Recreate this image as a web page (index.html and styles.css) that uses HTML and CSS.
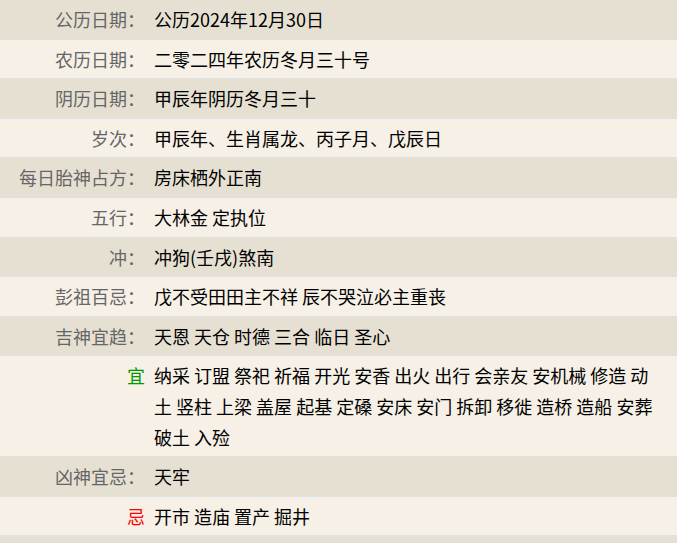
FILE: index.html
```html
<!DOCTYPE html>
<html lang="zh-CN">
<head>
    <meta charset="UTF-8">
    <meta name="viewport" content="width=device-width, initial-scale=1.0">
    <title>万年历 - 2024年12月30日</title>
    <link rel="stylesheet" href="styles.css">
</head>
<body>

    <table class="almanac">
        <tr><td class="label">公历日期：</td><td class="value">公历2024年12月30日</td></tr>
        <tr><td class="label">农历日期：</td><td class="value">二零二四年农历冬月三十号</td></tr>
        <tr><td class="label">阴历日期：</td><td class="value">甲辰年阴历冬月三十</td></tr>
        <tr><td class="label">岁次：</td><td class="value">甲辰年、生肖属龙、丙子月、戊辰日</td></tr>
        <tr><td class="label">每日胎神占方：</td><td class="value">房床栖外正南</td></tr>
        <tr><td class="label">五行：</td><td class="value">大林金 定执位</td></tr>
        <tr><td class="label">冲：</td><td class="value">冲狗(壬戌)煞南</td></tr>
        <tr><td class="label">彭祖百忌：</td><td class="value">戊不受田田主不祥 辰不哭泣必主重丧</td></tr>
        <tr><td class="label">吉神宜趋：</td><td class="value">天恩 天仓 时德 三合 临日 圣心</td></tr>
        <tr><td class="label good">宜</td><td class="value">纳采 订盟 祭祀 祈福 开光 安香 出火 出行 会亲友 安机械 修造 动土 竖柱 上梁 盖屋 起基 定磉 安床 安门 拆卸 移徙 造桥 造船 安葬 破土 入殓</td></tr>
        <tr><td class="label">凶神宜忌：</td><td class="value">天牢</td></tr>
        <tr><td class="label bad">忌</td><td class="value">开市 造庙 置产 掘井</td></tr>
        <tr class="spacer"><td class="label"></td><td class="value"></td></tr>
    </table>

</body>
</html>
```

FILE: styles.css
```css
body {
    margin: 0;
    background-color: #f6f0e6;
    font-family: "Noto Sans CJK SC", "Noto Sans", sans-serif;
    font-size: 18px;
    line-height: 1.7;
    color: #000;
}

.almanac {
    width: 100%;
    border-collapse: collapse;
}

.almanac tr {
    background-color: #f6f0e6;
    border-bottom: 1px solid #dde1e4;
}

.almanac tr:nth-child(odd) {
    background-color: #e6e0d2;
}

.almanac td {
    padding: 4px 0;
    vertical-align: top;
}

.almanac .spacer td {
    height: 30px;
}

.label {
    width: 145px;
    text-align: right;
    color: #666;
    white-space: nowrap;
}

.value {
    padding-left: 9px !important;
    padding-right: 16px !important;
}

.good {
    color: #090;
}

.bad {
    color: #f00;
}
```
